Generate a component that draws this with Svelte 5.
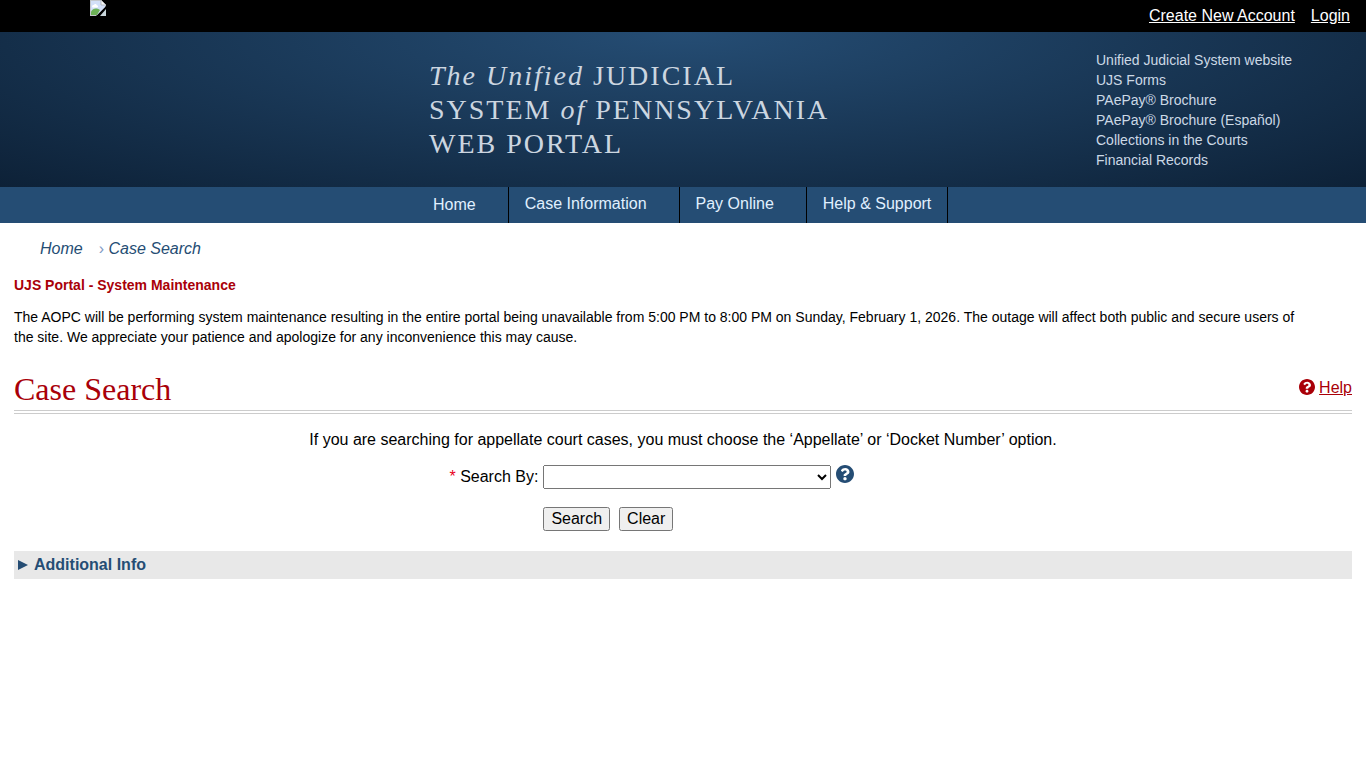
<script>
  const resources = [
    'Unified Judicial System website',
    'UJS Forms',
    'PAePay® Brochure',
    'PAePay® Brochure (Español)',
    'Collections in the Courts',
    'Financial Records'
  ];
  const menu = ['Case Information', 'Pay Online', 'Help & Support'];
  const searchTypes = ['', 'Appellate', 'Docket Number'];
  let searchBy = $state('');
</script>

{#snippet question()}
  <svg class="question" viewBox="8 8 496 496" aria-hidden="true">
    <path d="M504 256c0 136.997-111.043 248-248 248S8 392.997 8 256C8 119.083 119.043 8 256 8s248 111.083 248 248zM262.655 90c-54.497 0-89.255 22.957-116.549 63.758-3.536 5.286-2.353 12.415 2.715 16.258l34.699 26.31c5.205 3.947 12.621 3.008 16.665-2.122 17.864-22.658 30.113-35.797 57.303-35.797 20.429 0 45.698 13.148 45.698 32.958 0 14.976-12.363 22.667-32.534 33.976C247.128 238.528 216 254.941 216 296v4c0 6.627 5.373 12 12 12h56c6.627 0 12-5.373 12-12v-1.333c0-28.462 83.186-29.647 83.186-106.667 0-58.002-60.165-102-116.531-102zM256 338c-25.365 0-46 20.635-46 46 0 25.364 20.635 46 46 46s46-20.636 46-46c0-25.365-20.635-46-46-46z" />
  </svg>
{/snippet}

<div class="page">
  <div class="topbar">
    <svg class="seal" viewBox="0 0 16 16" aria-hidden="true">
      <path d="M0 0h11l5 5v1L6 16H0z" fill="#c3c7cc" />
      <path d="M1 1h10v4h4v2L7 15H1z" fill="#d3e0f8" />
      <path d="M2.500 7.500c-1.200-1.500.2-2.800 1.300-2.400.5-1.500 2.800-1.300 3 .2 1.400 0 1.700 1.700.5 2.200z" fill="#fff" />
      <path d="M1 15v-3.500c2-3 5-4 9-1.500L7 15z" fill="#6db257" />
      <path d="M11 0v5h5z" fill="#f6f7f8" />
      <path d="M11 0v5h5" fill="none" stroke="#a9adb3" stroke-width=".8" />
      <path d="M16 9v7h-6z" fill="#c9d6dc" />
    </svg>
    <nav class="account" aria-label="Account">
      <a href="#create">Create New Account</a>
      <a href="#login">Login</a>
    </nav>
  </div>

  <header class="banner">
    <div class="title"><em>The Unified</em> JUDICIAL<br />SYSTEM <em>of</em> PENNSYLVANIA<br />WEB PORTAL</div>
    <ul class="resources">
      {#each resources as item}
        <li><a href="#resources">{item}</a></li>
      {/each}
    </ul>
  </header>

  <nav class="menu" aria-label="Main">
    <a class="home" href="#home">Home</a>
    {#each menu as item, i}
      <button type="button" class:last={i === menu.length - 1}>{item}</button>
    {/each}
  </nav>

  <main>
    <nav class="crumbs" aria-label="Breadcrumb">
      <a href="#home">Home</a>
      <span class="current"><span class="sep">›</span> Case Search</span>
    </nav>

    <section class="notice">
      <h2>UJS Portal - System Maintenance</h2>
      <p>
        The AOPC will be performing system maintenance resulting in the entire portal being unavailable from 5:00 PM to
        8:00 PM on Sunday, February 1, 2026. The outage will affect both public and secure users of the site. We
        appreciate your patience and apologize for any inconvenience this may cause.
      </p>
    </section>

    <div class="heading">
      <h1>Case Search</h1>
      <a class="help" href="#help">{@render question()}<span>Help</span></a>
    </div>

    <p class="hint">
      If you are searching for appellate court cases, you must choose the ‘Appellate’ or ‘Docket Number’ option.
    </p>

    <form onsubmit={(e) => e.preventDefault()}>
      <label for="search-by"><span class="required">*</span> Search By:</label>
      <div class="field">
        <select id="search-by" bind:value={searchBy}>
          {#each searchTypes as type}
            <option value={type}>{type}</option>
          {/each}
        </select>
        <button type="button" class="tip" aria-label="About search types">{@render question()}</button>
      </div>
      <div class="actions">
        <button type="submit">Search</button>
        <button type="button" onclick={() => (searchBy = '')}>Clear</button>
      </div>
    </form>

    <button type="button" class="info" aria-expanded="false">
      <svg viewBox="0 0 10 10" aria-hidden="true"><path d="M0 0l10 5-10 5z" /></svg>
      Additional Info
    </button>
  </main>
</div>

<style>
  :global(body) {
    margin: 0;
    background: #fff;
  }
  .page {
    font: 16px/24px 'Liberation Sans', Arial, sans-serif;
    color: #000;
  }
  .question {
    display: block;
    width: 16px;
    height: 16px;
    fill: currentColor;
  }
  .topbar {
    display: flex;
    justify-content: space-between;
    min-height: 32px;
    padding: 0 16px 0 90px;
    background: #000;
  }
  .seal {
    width: 16px;
    height: 16px;
  }
  .account {
    display: flex;
    gap: 16px;
    padding-top: 4px;
  }
  .account a {
    color: #fff;
  }
  .banner {
    display: grid;
    grid-template-columns: 429px 1fr 270px;
    min-height: 155px;
    background: radial-gradient(ellipse at top, #254d74, #0d2137);
  }
  .title {
    grid-column: 2;
    padding-top: 27px;
    font: 28px/34px 'Liberation Serif', 'Times New Roman', serif;
    letter-spacing: 2px;
    color: #ccd6e0;
    white-space: nowrap;
  }
  .resources {
    margin: 0;
    padding: 18px 0 0;
    list-style: none;
    font-size: 14px;
    line-height: 20px;
  }
  .resources a {
    color: #ccd9e6;
    text-decoration: none;
  }
  .menu {
    display: flex;
    min-height: 36px;
    padding-left: 417px;
    background: #254d74;
  }
  .menu a,
  .menu button {
    box-sizing: border-box;
    margin: 0;
    padding: 0 32px 2px 16px;
    border: 0;
    border-right: 1px solid #000;
    background: none;
    font: inherit;
    line-height: 34px;
    color: #e0f0ff;
    text-decoration: none;
  }
  .menu .home {
    line-height: 36px;
    padding-bottom: 0;
  }
  .menu .last {
    padding-right: 16px;
  }
  main {
    padding: 0 14px;
  }
  .crumbs {
    display: flex;
    gap: 16px;
    padding: 14px 0 0 26px;
    font-style: italic;
    color: #254d74;
  }
  .crumbs a {
    color: inherit;
    text-decoration: none;
  }
  .sep {
    color: #7f9bc4;
    font-style: normal;
  }
  .notice {
    padding-top: 14px;
    font-size: 14px;
    line-height: 20px;
  }
  .notice h2 {
    margin: 0 0 12px;
    font-size: 14px;
    line-height: 20px;
    color: #a90008;
  }
  .notice p {
    margin: 0;
    padding-right: 48px;
  }
  .heading {
    display: flex;
    justify-content: space-between;
    align-items: center;
    margin-top: 22px;
    padding-bottom: 1px;
    border-bottom: 4px double #ccc;
  }
  h1 {
    margin: 0;
    font: 32px/40px 'Liberation Serif', 'Times New Roman', serif;
    color: #a90008;
  }
  .help {
    display: flex;
    align-items: center;
    gap: 4px;
    padding-bottom: 2px;
    color: #a90008;
    text-decoration: none;
  }
  .help .question {
    margin-bottom: 2px;
  }
  .help span {
    text-decoration: underline;
  }
  .hint {
    margin: 14px 0 12px;
    text-align: center;
  }
  form {
    display: grid;
    grid-template-columns: 2fr 3fr;
    column-gap: 5px;
    row-gap: 16px;
    margin-right: 22px;
  }
  label {
    text-align: right;
    line-height: 26px;
  }
  .required {
    color: #e8001c;
  }
  .field {
    display: flex;
    align-items: flex-start;
    gap: 5px;
    padding-top: 1px;
  }
  select {
    width: 288px;
    height: 24px;
    margin: 0;
    font: inherit;
    color: #000;
  }
  .tip {
    width: 18px;
    height: 18px;
    padding: 0;
    border: 0;
    background: none;
    color: #254d74;
  }
  .tip .question {
    width: 18px;
    height: 18px;
  }
  .actions {
    grid-column: 2;
    display: flex;
    gap: 9px;
    padding-top: 1px;
  }
  .actions button {
    height: 24px;
    padding: 1px 6px;
    font: inherit;
    line-height: 18px;
    color: #000;
  }
  .info {
    display: flex;
    align-items: center;
    gap: 6px;
    width: 100%;
    min-height: 28px;
    margin: 20px 0 0;
    padding: 0 4px;
    border: 0;
    background: #e8e8e8;
    font: inherit;
    font-weight: bold;
    color: #254d74;
  }
  .info svg {
    width: 10px;
    height: 10px;
    fill: currentColor;
  }
</style>
